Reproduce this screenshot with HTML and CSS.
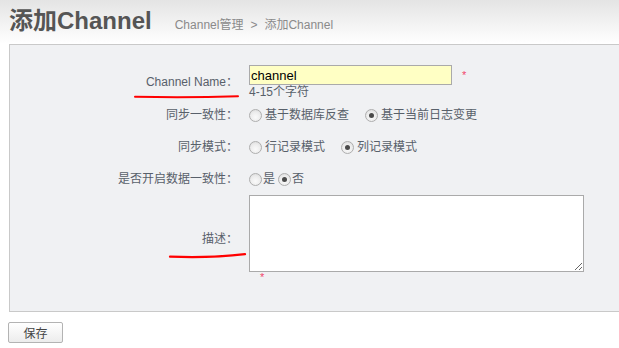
FILE: index.html
```html
<!DOCTYPE html>
<html lang="zh">
<head>
<meta charset="utf-8">
<title>添加Channel</title>
<link rel="stylesheet" href="styles.css">
</head>
<body>
<div class="header">
  <h1 class="title">添加Channel</h1>
  <span class="crumb">Channel管理<span class="sep">&gt;</span>添加Channel</span>
</div>
<div class="panel">
  <div class="form">
    <div class="lbl">Channel Name：</div>
    <div class="field f-name">
      <div class="name-line"><input class="txt" type="text" value="channel"><span class="req">*</span></div>
      <div class="hint">4-15个字符</div>
    </div>

    <div class="lbl">同步一致性：</div>
    <div class="field f-opts">
      <span class="opt"><span class="radio"></span>基于数据库反查</span>
      <span class="opt"><span class="radio on"></span>基于当前日志变更</span>
    </div>

    <div class="lbl">同步模式：</div>
    <div class="field f-opts">
      <span class="opt"><span class="radio"></span>行记录模式</span>
      <span class="opt"><span class="radio on"></span>列记录模式</span>
    </div>

    <div class="lbl">是否开启数据一致性：</div>
    <div class="field f-opts tight">
      <span class="opt"><span class="radio"></span>是</span>
      <span class="opt"><span class="radio on"></span>否</span>
    </div>

    <div class="lbl">描述：</div>
    <div class="field f-desc">
      <textarea class="area"></textarea>
      <div class="req req-below">*</div>
    </div>
  </div>
</div>
<div class="actions"><button class="btn" type="button">保存</button></div>
<svg class="marks" width="619" height="348" viewBox="0 0 619 348">
  <path d="M135 96.8 C 170 97.6, 205 97.4, 238 96.2" fill="none" stroke="#f00" stroke-width="2" stroke-linecap="round"/>
  <path d="M170 256.6 C 195 257.6, 222 256.8, 245 254.2" fill="none" stroke="#f00" stroke-width="2.2" stroke-linecap="round"/>
</svg>
</body>
</html>
```
FILE: styles.css
```css
* { box-sizing: border-box; }
html, body { margin: 0; padding: 0; }
body {
  position: relative;
  width: 619px;
  height: 348px;
  overflow: hidden;
  background: #fff;
  font-family: "Liberation Sans", "Noto Sans CJK SC", sans-serif;
  font-size: 12px;
  color: #58606a;
}
.header {
  display: flex;
  align-items: baseline;
  height: 44px;
  padding: 9px 0 0 9px;
  background: linear-gradient(#e4e4e4, #f7f7f7 70%, #fff);
}
.title {
  margin: 0;
  font-size: 24px;
  line-height: 24px;
  font-weight: bold;
  color: #555;
  font-family: "Liberation Sans", "Noto Sans CJK SC", sans-serif;
}
.crumb {
  margin-left: 23px;
  font-size: 12px;
  color: #8a8a8a;
}
.sep { margin: 0 7px 0 7px; }
.panel {
  margin-left: 9px;
  border: 1px solid #c9c9c9;
  border-right: none;
  background: #f0f1f3;
  padding: 19px 0 28px;
}
.form {
  display: grid;
  grid-template-columns: 228px 1fr;
  grid-template-rows: 35px 32px 32px 32px 88px;
  column-gap: 11px;
}
.lbl {
  align-self: center;
  text-align: right;
  white-space: nowrap;
  line-height: 16px;
}
.field { min-width: 0; }
.f-name { padding-top: 1px; }
.name-line { display: flex; align-items: flex-start; }
.txt {
  width: 203px;
  height: 20px;
  margin: 0;
  padding: 0 1px;
  border: 1px solid #aaa;
  background: #ffffc4;
  font-family: "Liberation Sans", sans-serif;
  font-size: 13px;
  color: #000;
  outline: none;
}
.req {
  color: #f2456b;
  font-size: 11px;
  line-height: 11px;
  font-family: "Liberation Sans", sans-serif;
}
.name-line .req { margin: 5px 0 0 10px; }
.hint { line-height: 13px; margin-top: 1px; }
.f-opts {
  display: flex;
  align-items: center;
  line-height: 16px;
}
.opt { display: flex; align-items: center; white-space: nowrap; }
.opt + .opt { margin-left: 16px; }
.radio {
  width: 13px;
  height: 13px;
  margin-right: 3px;
  border-radius: 50%;
  border: 1px solid #aeaeae;
  background: radial-gradient(circle at 50% 65%, #fafafa 0, #ececec 55%, #d6d6d6 100%);
  position: relative;
  flex: none;
}
.radio.on::after {
  content: "";
  position: absolute;
  left: 3px;
  top: 3px;
  width: 5px;
  height: 5px;
  border-radius: 50%;
  background: #4a4a4a;
}
.tight .radio { margin-right: 1px; }
.tight .opt + .opt { margin-left: 3px; }
.area {
  display: block;
  width: 335px;
  height: 77px;
  margin: 0;
  border: 1px solid #aaa;
  background: #fff;
  resize: both;
}
.req-below { margin: 1px 0 0 11px; line-height: 9px; }
.actions { padding: 10px 0 0 8px; }
.btn {
  display: block;
  width: 55px;
  height: 21px;
  margin: 0;
  padding: 0;
  border: 1px solid #b3b3b3;
  border-radius: 2px;
  background: linear-gradient(#fff, #ececec);
  font-family: "Noto Sans CJK SC", sans-serif;
  font-size: 12px;
  line-height: 19px;
  color: #444;
}
.marks {
  position: absolute;
  left: 0;
  top: 0;
  pointer-events: none;
}
```
